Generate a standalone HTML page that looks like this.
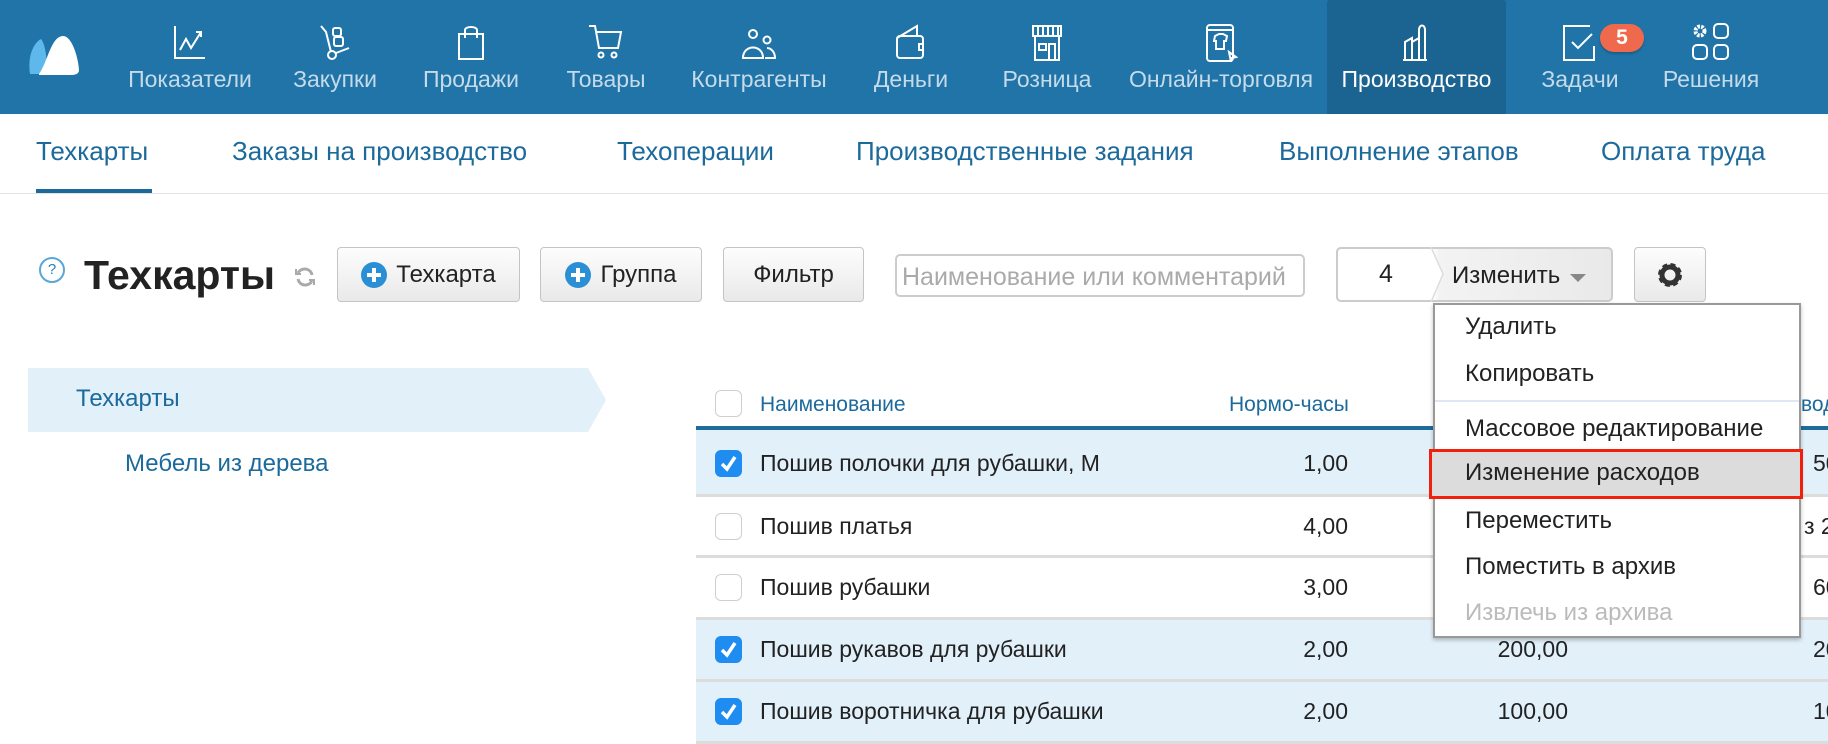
<!DOCTYPE html>
<html><head><meta charset="utf-8"><style>
*{box-sizing:border-box;margin:0;padding:0}
body{width:1828px;height:740px;overflow:hidden;background:#fff;font-family:"Liberation Sans",Arial,sans-serif;position:relative;color:#222}
.a{position:absolute}
.top{left:0;top:0;width:1828px;height:114px;background:#2074a8}
.ni{position:absolute;top:0;height:114px;text-align:center;color:#c5dbea;font-size:23px}
.ni svg{position:absolute;top:22px;left:50%;margin-left:-20px}
.ni span{position:absolute;top:66px;left:-20px;right:-20px;white-space:nowrap}
.sub{font-size:26px;color:#1c6a9c;top:136px;white-space:nowrap}
.btn{position:absolute;top:247px;height:55px;border:1px solid #c4c4c4;border-radius:4px;background:linear-gradient(#fdfdfd,#e9e9e9);font-size:24px;color:#222;display:flex;align-items:center;justify-content:center;gap:9px}
.plus{width:26px;height:26px;border-radius:50%;background:#2b8fd6;position:relative}
.plus:before{content:"";position:absolute;left:6px;top:11px;width:14px;height:4px;background:#fff}
.plus:after{content:"";position:absolute;left:11px;top:6px;width:4px;height:14px;background:#fff}
.row{position:absolute;left:696px;width:1132px;border-bottom:3px solid #dcdcdc;font-size:23px;white-space:nowrap}
.row .cb{position:absolute;left:19px;width:27px;height:27px;border:1px solid #cfcfcf;border-radius:6px;background:#fff}
.row .cb.on{background:#1e8cf0;border-color:#1e8cf0}
.row .t{position:absolute;left:64px;white-space:nowrap}
.row .n{position:absolute;right:480px;text-align:right}
.row .m{position:absolute;right:260px;text-align:right}
.row .k{position:absolute;left:1117px}
.dd{left:1433px;top:303px;width:368px;height:335px;border:2px solid #999;background:#fff;box-shadow:0 2px 4px rgba(0,0,0,.25)}
.di{position:absolute;left:30px;font-size:24px;color:#222;white-space:nowrap}
</style></head><body>
<div class="a top"></div>
<svg class="a" style="left:27px;top:34px" width="54" height="42" viewBox="0 0 54 42"><path d="M3 40 C0 20 8 8 14 5 C18 10 20 22 20 40 Z" fill="#5fb8ec"/><path d="M12 40 C20 30 24 2 36 2 C46 2 52 28 52 36 C52 40 48 41 44 41 L12 41 Z" fill="#fff"/></svg>

<div class="ni" style="left:125px;width:130px"><svg width="40" height="40" viewBox="0 0 40 40" fill="none" stroke="#fff" stroke-width="2"><path d="M5 4V36H35"/><path d="M10 28L16 17L21 26L31 10"/><path d="M26 10H31V15"/></svg><span>Показатели</span></div>
<div class="ni" style="left:280px;width:110px"><svg width="40" height="40" viewBox="0 0 40 40" fill="none" stroke="#fff" stroke-width="2"><path d="M6 4L11 10L16 30"/><circle cx="17" cy="33" r="4"/><path d="M21 31L34 26"/><rect x="18" y="6" width="8" height="8" rx="2"/><rect x="19" y="15" width="9" height="9" rx="2"/></svg><span>Закупки</span></div>
<div class="ni" style="left:415px;width:112px"><svg width="40" height="40" viewBox="0 0 40 40" fill="none" stroke="#fff" stroke-width="2"><path d="M8 12H32L32 37H8Z"/><path d="M14 16V8C14 4 26 4 26 8V16"/></svg><span>Продажи</span></div>
<div class="ni" style="left:555px;width:102px"><svg width="40" height="40" viewBox="0 0 40 40" fill="none" stroke="#fff" stroke-width="2"><path d="M3 4H9L13 26H32L35 10H10"/><circle cx="15" cy="33" r="2.5"/><circle cx="28" cy="33" r="2.5"/></svg><span>Товары</span></div>
<div class="ni" style="left:685px;width:148px"><svg width="40" height="40" viewBox="0 0 40 40" fill="none" stroke="#fff" stroke-width="2"><circle cx="14" cy="12" r="4"/><path d="M4 36C4 22 24 22 24 36Z"/><circle cx="28" cy="18" r="3.5"/><path d="M26 36H36C36 30 32 26 28 26"/></svg><span>Контрагенты</span></div>
<div class="ni" style="left:860px;width:102px"><svg width="40" height="40" viewBox="0 0 40 40" fill="none" stroke="#fff" stroke-width="2"><path d="M6 16L26 4V14"/><rect x="6" y="14" width="26" height="22" rx="3"/><path d="M32 22H28V28H32"/></svg><span>Деньги</span></div>
<div class="ni" style="left:990px;width:114px"><svg width="40" height="40" viewBox="0 0 40 40" fill="none" stroke="#fff" stroke-width="2"><path d="M6 4H34V14H6Z"/><path d="M11 4V14M16 4V14M21 4V14M26 4V14M31 4V14"/><path d="M8 14V38H32V14"/><rect x="12" y="22" width="7" height="6"/><path d="M22 38V22H28V38"/></svg><span>Розница</span></div>
<div class="ni" style="left:1130px;width:182px"><svg width="40" height="40" viewBox="0 0 40 40" fill="none" stroke="#fff" stroke-width="2"><rect x="6" y="3" width="26" height="36" rx="3"/><path d="M6 8H32"/><path d="M14 14L18 12H22L26 14L25 19H23V27H15V19H13Z"/><path d="M28 30L35 35L31 36L30 40Z"/></svg><span>Онлайн-торговля</span></div>
<div class="ni" style="left:1327px;width:179px;background:#1b6391;color:#fff;border-radius:3px 3px 0 0"><svg width="40" height="40" viewBox="0 0 40 40" fill="none" stroke="#fff" stroke-width="2"><path d="M8 38V20L15 16V38M15 20L22 16V38M22 38V8C22 2 28 2 28 8V38ZM6 38H30"/></svg><span style="left:0;right:0">Производство</span></div>
<div class="ni" style="left:1530px;width:100px"><svg width="40" height="40" viewBox="0 0 40 40" fill="none" stroke="#fff" stroke-width="2"><path d="M34 24V38H4V4H30"/><path d="M12 20L18 26L32 12"/></svg><span>Задачи</span></div>
<div class="a" style="left:1600px;top:24px;width:44px;height:28px;border-radius:14px;background:#ef6a4c;color:#fff;font-weight:bold;font-size:21px;text-align:center;line-height:28px;box-shadow:0 2px 2px rgba(0,0,0,.2)">5</div>
<div class="ni" style="left:1656px;width:110px"><svg width="40" height="40" viewBox="0 0 40 40" fill="none" stroke="#fff" stroke-width="2"><circle cx="9" cy="9" r="4.5" stroke-width="4" stroke-dasharray="2.5 1.2"/><rect x="23" y="2" width="14" height="14" rx="4"/><rect x="2" y="23" width="14" height="14" rx="4"/><rect x="23" y="23" width="14" height="14" rx="4"/></svg><span>Решения</span></div>

<div class="a sub" style="left:36px">Техкарты</div>
<div class="a" style="left:36px;top:189px;width:116px;height:5px;background:#1c6a9c"></div>
<div class="a sub" style="left:232px">Заказы на производство</div>
<div class="a sub" style="left:617px">Техоперации</div>
<div class="a sub" style="left:856px">Производственные задания</div>
<div class="a sub" style="left:1279px">Выполнение этапов</div>
<div class="a sub" style="left:1601px">Оплата труда</div>
<div class="a" style="left:0;top:193px;width:1828px;height:1px;background:#e3e3e3"></div>

<div class="a" style="left:39px;top:257px;width:26px;height:26px;border:2px solid #5aa6d9;border-radius:50%;color:#2e7cb8;font-size:15px;text-align:center;line-height:22px">?</div>
<div class="a" style="left:84px;top:252px;font-size:41px;font-weight:bold;color:#222">Техкарты</div>
<svg class="a" style="left:294px;top:266px" width="22" height="22" viewBox="0 0 22 22" fill="none" stroke="#aaa" stroke-width="3"><path d="M18 9A7.5 7.5 0 0 0 4 7"/><path d="M4 13A7.5 7.5 0 0 0 18 15"/><path d="M2 3V8H7" stroke-width="2"/><path d="M20 19V14H15" stroke-width="2"/></svg>
<div class="btn" style="left:337px;width:183px"><div class="plus"></div>Техкарта</div>
<div class="btn" style="left:540px;width:162px"><div class="plus"></div>Группа</div>
<div class="btn" style="left:723px;width:141px">Фильтр</div>
<div class="a" style="left:895px;top:254px;width:410px;height:43px;border:2px solid #ccc;border-radius:5px;font-size:25px;color:#aaa;padding:7px 5px;white-space:nowrap;overflow:hidden">Наименование или комментарий</div>
<div class="a" style="left:1336px;top:247px;width:277px;height:55px;border:2px solid #ccc;border-radius:5px;background:linear-gradient(90deg,#fff 35%,#f3f3f3 37%,#e9e9e9)"></div>
<div class="a" style="left:1336px;top:247px;width:98px;height:55px;background:#fff;border:2px solid #ccc;border-right:none;border-radius:5px 0 0 5px;font-size:25px;text-align:center;line-height:51px">4</div>
<svg class="a" style="left:1430px;top:247px" width="16" height="55"><path d="M1 0L13 27L1 55" fill="#fff" stroke="#ddd" stroke-width="1.5"/></svg>
<div class="a" style="left:1452px;top:262px;font-size:24px">Изменить</div>
<div class="a" style="left:1570px;top:274px;width:0;height:0;border-left:8px solid transparent;border-right:8px solid transparent;border-top:8px solid #888"></div>
<div class="btn" style="left:1634px;width:72px"><svg width="32" height="32" viewBox="0 0 32 32"><circle cx="16" cy="16" r="9" fill="none" stroke="#333" stroke-width="6" stroke-dasharray="4.2 2.9"/><circle cx="16" cy="16" r="8" fill="none" stroke="#333" stroke-width="5"/></svg></div>

<svg class="a" style="left:28px;top:368px" width="580" height="64"><path d="M0 0H560L578 32L560 64H0Z" fill="#e2f0fa"/></svg>
<div class="a" style="left:76px;top:385px;font-size:24px;color:#1c6a9c">Техкарты</div>
<div class="a" style="left:125px;top:450px;font-size:24px;color:#1c6a9c">Мебель из дерева</div>

<div class="a" style="left:715px;top:390px;width:27px;height:27px;border:1px solid #cfcfcf;border-radius:6px"></div>
<div class="a" style="left:760px;top:393px;font-size:21px;color:#1c6a9c">Наименование</div>
<div class="a" style="left:1229px;top:393px;font-size:21px;color:#1c6a9c">Нормо-часы</div>
<div class="a" style="left:1801px;top:393px;font-size:21px;color:#1c6a9c">вод</div>
<div class="a" style="left:696px;top:426px;width:1132px;height:4px;background:#1f6b9c"></div>

<div class="row" style="top:430px;height:67px;background:#e2f0fa"><div class="cb on" style="top:20px"><svg width="25" height="25"><path d="M6 13L11 18L19 6" stroke="#fff" stroke-width="3.5" fill="none"/></svg></div><div class="t" style="top:20px">Пошив полочки для рубашки, М</div><div class="n" style="top:20px">1,00</div><div class="k" style="top:20px">50</div></div>
<div class="row" style="top:497px;height:61px"><div class="cb" style="top:16px"></div><div class="t" style="top:16px">Пошив платья</div><div class="n" style="top:16px">4,00</div><div class="k" style="top:16px;left:1108px">з 20</div></div>
<div class="row" style="top:558px;height:62px"><div class="cb" style="top:16px"></div><div class="t" style="top:16px">Пошив рубашки</div><div class="n" style="top:16px">3,00</div><div class="k" style="top:16px">60</div></div>
<div class="row" style="top:620px;height:62px;background:#e2f0fa"><div class="cb on" style="top:16px"><svg width="25" height="25"><path d="M6 13L11 18L19 6" stroke="#fff" stroke-width="3.5" fill="none"/></svg></div><div class="t" style="top:16px">Пошив рукавов для рубашки</div><div class="n" style="top:16px">2,00</div><div class="m" style="top:16px">200,00</div><div class="k" style="top:16px">20</div></div>
<div class="row" style="top:682px;height:62px;background:#e2f0fa"><div class="cb on" style="top:16px"><svg width="25" height="25"><path d="M6 13L11 18L19 6" stroke="#fff" stroke-width="3.5" fill="none"/></svg></div><div class="t" style="top:16px">Пошив воротничка для рубашки</div><div class="n" style="top:16px">2,00</div><div class="m" style="top:16px">100,00</div><div class="k" style="top:16px">10</div></div>

<div class="a dd">
<div class="di" style="top:8px">Удалить</div>
<div class="di" style="top:55px">Копировать</div>
<div style="position:absolute;left:0;right:0;top:95px;height:2px;background:#dde8f2"></div>
<div class="di" style="top:110px">Массовое редактирование</div>
<div style="position:absolute;left:-6px;right:-4px;top:144px;height:50px;background:#dcdcdc;border:3px solid #f0200c"></div>
<div class="di" style="top:154px">Изменение расходов</div>
<div class="di" style="top:202px">Переместить</div>
<div class="di" style="top:248px">Поместить в архив</div>
<div class="di" style="top:294px;color:#bbb">Извлечь из архива</div>
</div>
</body></html>
